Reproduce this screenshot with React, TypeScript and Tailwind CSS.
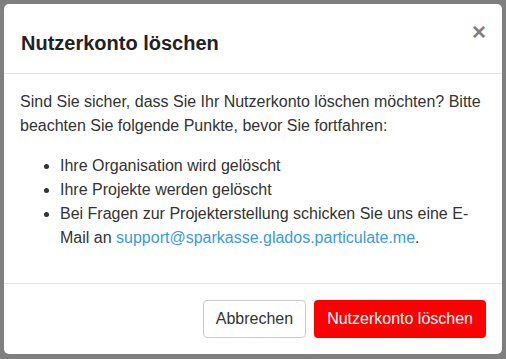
import { FC } from "react";

const App: FC = () => {
    return (
        <div
            className="min-h-screen w-full bg-[#7f7f7f] p-1 text-[#333] [font-family:'Liberation_Sans',Arial,sans-serif]"
        >
            <div className="w-[498px] h-[350px] flex flex-col rounded-[5px] bg-white">
                <div className="flex items-start border-b border-[#e5e5e5] pl-[17px] pr-4 pt-6 pb-[15px]">
                    <h4 className="text-[20px] leading-[30px] font-bold text-[#222]">Nutzerkonto löschen</h4>
                    <button className="ml-auto -mt-[8px] text-[24px] leading-none font-bold text-[#808080]">×</button>
                </div>
                <div className="flex-1 pl-4 pr-[17px] py-4 text-base leading-6">
                    <p className="mb-4">
                        Sind Sie sicher, dass Sie Ihr Nutzerkonto löschen möchten? Bitte beachten Sie folgende Punkte, bevor Sie fortfahren:
                    </p>
                    <ul className="list-disc pl-10">
                        <li>Ihre Organisation wird gelöscht</li>
                        <li>Ihre Projekte werden gelöscht</li>
                        <li>
                            Bei Fragen zur Projekterstellung schicken Sie uns eine E-Mail an <a href="#" className="text-[#3a9ae6]">support@sparkasse.glados.particulate.me</a>.
                        </li>
                    </ul>
                </div>
                <div className="flex justify-end gap-2 border-t border-[#e5e5e5] px-4 pt-4 pb-4">
                    <button className="h-[38px] rounded border border-[#ccc] bg-white px-3 text-base text-[#333]">Abbrechen</button>
                    <button className="h-[38px] rounded bg-[#ff0000] px-[13px] text-base text-white">Nutzerkonto löschen</button>
                </div>
            </div>
        </div>
    );
};

export default App;
